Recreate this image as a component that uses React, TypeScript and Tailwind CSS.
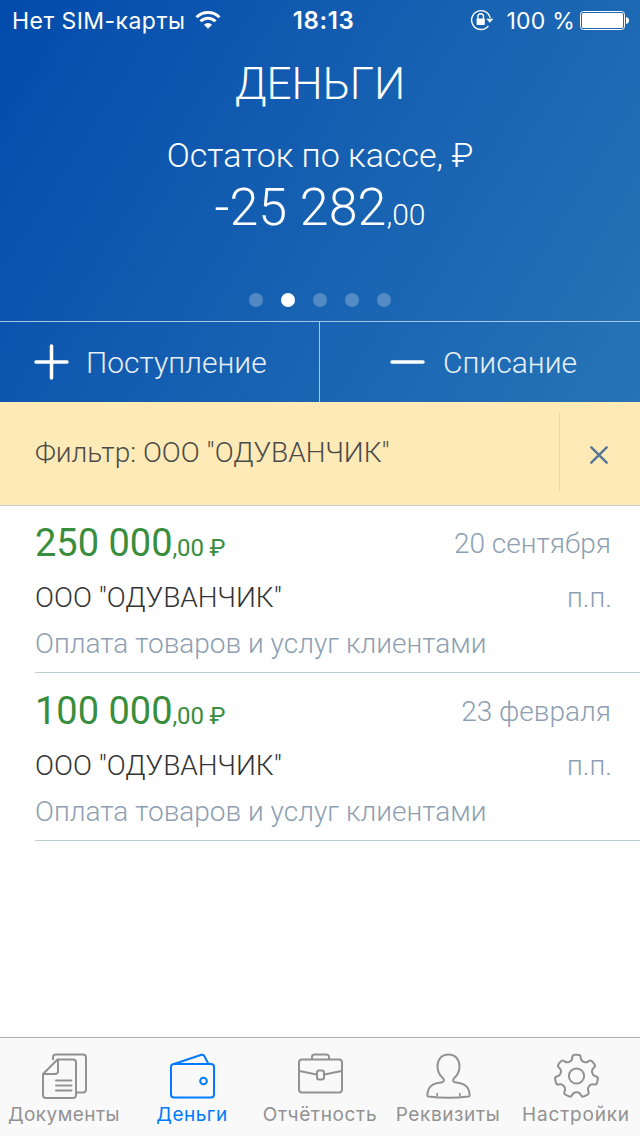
import type { ReactNode } from "react";

const roboto = "font-[Roboto,'Noto_Sans',sans-serif]";
const inter = "font-[Inter,'Noto_Sans',sans-serif]";

function WifiIcon() {
  return (
    <svg width="26" height="20" viewBox="0 0 26 20" fill="none" stroke="#fff" strokeWidth="2.9">
      <path d="M1.5 7.300A16.300 16.300 0 0 1 24.500 7.300" />
      <path d="M5.500 11.300A10.600 10.600 0 0 1 20.500 11.300" />
      <path d="M13 18.800L9 14.800A5.600 5.600 0 0 1 17 14.800Z" fill="#fff" stroke="none" />
    </svg>
  );
}

function LockIcon() {
  return (
    <svg width="24" height="22" viewBox="0 0 24 22" fill="none" stroke="#fff">
      <path d="M18.4 16.9A9.4 9.4 0 1 1 20.2 9.2" strokeWidth="1.4" />
      <path d="M16.2 9.8H23.4L19.8 13.8Z" fill="#fff" stroke="none" />
      <path d="M7.900 10V7.600a2.800 2.800 0 0 1 5.600 0V10" strokeWidth="1.400" />
      <rect x="6.600" y="9.400" width="8.200" height="6.600" rx=".800" fill="#fff" stroke="none" />
    </svg>
  );
}

function BatteryIcon() {
  return (
    <svg width="50" height="20" viewBox="0 0 50 20" fill="#fff">
      <rect x=".5" y="1.5" width="44" height="18" rx="3" fill="none" stroke="#fff" />
      <rect x="2" y="3" width="41" height="15" rx="1.5" />
      <path d="M46 7.100q3 .800 3 3.400t-3 3.400z" />
    </svg>
  );
}

function DocumentsIcon() {
  return (
    <>
      <path d="M11 7V4.500a3 3 0 0 1 3-3H41a3 3 0 0 1 3 3V36.500a3 3 0 0 1-3 3H34.500" />
      <path d="M15.500 6.500H31a3 3 0 0 1 3 3V42a3 3 0 0 1-3 3H4a3 3 0 0 1-3-3V21z" />
      <path d="M16 7V18.500a2.500 2.500 0 0 1-2.500 2.500H1.500" />
      <path d="M14 27.500H29.500M14 32.500H29.500M14 37.500H29.500" strokeLinecap="round" />
    </>
  );
}

function WalletIcon() {
  return (
    <>
      <rect x="1" y="11" width="43" height="33.500" rx="3" />
      <path d="M4 11L31.500 1.800q2-.600 2.800 1.200L38.500 11" />
      <circle cx="33.500" cy="28" r="3.300" />
    </>
  );
}

function BriefcaseIcon() {
  return (
    <>
      <rect x="1" y="6.500" width="43" height="33" rx="3" />
      <path d="M14 6.500V4a2.500 2.500 0 0 1 2.500-2.500H28.500A2.500 2.500 0 0 1 31 4V6.500" />
      <path d="M1.500 18L18.500 21.500M26.500 21.500L43.500 18" />
      <rect x="19" y="17.500" width="7" height="9" rx="2" />
    </>
  );
}

function PersonIcon() {
  return (
    <>
      <path d="M22.500 1.500C15.500 1.500 11.500 6.500 11.500 13.500C11.500 19 13.500 22 16.500 24.800C18.600 26.800 18.500 29.300 15 29.600C7 30.400 1.800 33 1.300 42.300Q1.300 43.300 2.500 43.500Q12 44.700 22.500 44.700T42.500 43.500Q43.700 43.300 43.700 42.300C43.200 33 38 30.400 30 29.600C26.500 29.300 26.400 26.800 28.500 24.800C31.500 22 33.500 19 33.500 13.500C33.500 6.500 29.500 1.500 22.500 1.500Z" />
      <path d="M11.200 40V43.500M33.800 40V43.500" strokeWidth="1.600" />
    </>
  );
}

function gearOutline() {
  const points: number[][] = [];
  for (let tooth = 0; tooth < 7; tooth++) {
    const profile = [[-15, 16.4], [-11, 21.9], [11, 21.9], [15, 16.4]];
    for (const [offset, radius] of profile) {
      const angle = ((tooth * 360) / 7 + offset - 90) * (Math.PI / 180);
      points.push([22.5 + radius * Math.cos(angle), 23.2 + radius * Math.sin(angle)]);
    }
  }
  return (
    points
      .map(([x, y], i) => {
        const toward = ([px, py]: number[]) => {
          const length = Math.hypot(px - x, py - y);
          const t = Math.min(2.7, length / 2) / length;
          return `${(x + (px - x) * t).toFixed(2)} ${(y + (py - y) * t).toFixed(2)}`;
        };
        const before = toward(points[(i + points.length - 1) % points.length]);
        const after = toward(points[(i + 1) % points.length]);
        return `${i ? "L" : "M"}${before}Q${x.toFixed(2)} ${y.toFixed(2)} ${after}`;
      })
      .join("") + "Z"
  );
}

function GearIcon() {
  return (
    <>
      <path d={gearOutline()} />
      <circle cx="22.500" cy="23" r="7.600" />
    </>
  );
}

function Tab({ label, active, tracking, children }: { label: string; active?: boolean; tracking: string; children: ReactNode }) {
  return (
    <div className={`flex flex-1 flex-col items-center pt-[15px] ${active ? "text-[#007aff]" : "text-[#929292]"}`}>
      <svg width="45" height="46" viewBox="0 0 45 46" fill="none" stroke="currentColor" strokeWidth="2" strokeLinejoin="round">
        {children}
      </svg>
      <span className={`${inter} ${tracking} mt-[4px] text-[19px] leading-[24px] whitespace-nowrap`}>{label}</span>
    </div>
  );
}

function Operation({ amount, date }: { amount: string; date: string }) {
  return (
    <div className="ml-[35px] h-[168px] border-b border-[#b9cfd4] pr-[29px] pt-[15px] text-[28px] font-light text-[#8e9fb3]">
      <div className="flex h-[46px] justify-between">
        <span className="text-[38px] leading-[46px] font-normal text-[#388e3c]">
          {amount}
          <span className="text-[24px] tracking-[-0.2px]">,00 ₽</span>
        </span>
        <span className="leading-[48px]">{date}</span>
      </div>
      <div className="mt-[9px] flex h-[46px] justify-between leading-[46px]">
        <span className="text-[#333]">ООО "ОДУВАНЧИК"</span>
        <span className="-mr-px">п.п.</span>
      </div>
      <div className="h-[46px] leading-[46px]">Оплата товаров и услуг клиентами</div>
    </div>
  );
}

export default function App() {
  return (
    <div className={`${roboto} flex h-[1136px] w-[640px] flex-col overflow-hidden bg-white`}>
      <header className="flex h-[402px] flex-col bg-[linear-gradient(122deg,#034bab_0%,#1862b2_55%,#2674b7_100%)] text-white">
        <div className={`${inter} grid h-[40px] grid-cols-[1fr_auto_1fr] items-center pl-[12px] pr-[10px] text-[23px]`}>
          <div className="flex items-center gap-[10px]">
            <span className="mt-[2px] tracking-[0.45px]">Нет SIM-карты</span>
            <WifiIcon />
          </div>
          <span className="mt-[2px] ml-[5px] text-[24px] font-semibold tracking-[0.6px]">18:13</span>
          <div className="flex items-center justify-end">
            <LockIcon />
            <span className="mt-[2px] mr-[5px] ml-[13px] tracking-[0.2px]">100 %</span>
            <BatteryIcon />
          </div>
        </div>
        <h1 className="mt-[18px] h-[52px] text-center text-[44px] leading-[52px] font-light">ДЕНЬГИ</h1>
        <div className="mt-[25px] h-[40px] text-center text-[34px] leading-[40px] font-light">Остаток по кассе, ₽</div>
        <div className="mt-[3px] h-[60px] text-center text-[52px] leading-[60px] font-light">
          -25 282<span className="text-[30px]">,00</span>
        </div>
        <div className="mt-[55px] flex justify-center gap-[18px]">
          <i className="size-[14px] rounded-full bg-white/25" />
          <i className="size-[14px] rounded-full bg-white" />
          <i className="size-[14px] rounded-full bg-white/25" />
          <i className="size-[14px] rounded-full bg-white/25" />
          <i className="size-[14px] rounded-full bg-white/25" />
        </div>
        <div className="mt-auto grid h-[81px] grid-cols-2 border-t border-[#a9c6e3] text-[30px] font-light text-white/90">
          <div className="flex items-center border-r border-[#a9c6e3] pl-[34px]">
            <svg width="35" height="36" viewBox="0 0 35 36" stroke="#fff" strokeWidth="3.500" strokeLinecap="round">
              <path d="M2 18H33M17.500 2V34" />
            </svg>
            <span className="mt-px ml-[17px]">Поступление</span>
          </div>
          <div className="flex items-center pl-[70px]">
            <svg width="35" height="36" viewBox="0 0 35 36" stroke="#fff" strokeWidth="3.500" strokeLinecap="round">
              <path d="M2 18H33" />
            </svg>
            <span className="mt-px ml-[18px]">Списание</span>
          </div>
        </div>
      </header>

      <div className="flex h-[104px] items-start border-b border-[#c6cfcf] bg-[#feeab6] pt-[10px]">
        <span className="flex-1 pt-[21px] pl-[35px] text-[28px] leading-[40px] font-light text-[#4a4a4a]">Фильтр: ООО "ОДУВАНЧИК"</span>
        <div className="flex h-[80px] w-[81px] items-center justify-center border-l border-[#e8d7ad]">
          <svg className="mt-[6px] mr-[2px]" width="20" height="20" viewBox="0 0 20 20" stroke="#557699" strokeWidth="2.400" strokeLinecap="round">
            <path d="M2.300 2.300L17.700 17.700M17.700 2.300L2.300 17.700" />
          </svg>
        </div>
      </div>

      <main className="-mt-px flex-1">
        <Operation amount="250 000" date="20 сентября" />
        <Operation amount="100 000" date="23 февраля" />
      </main>

      <nav className="flex h-[99px] border-t border-[#b0b0b0] bg-[#f9f9f9]">
        <Tab label="Документы" tracking="tracking-[0.45px]"><DocumentsIcon /></Tab>
        <Tab label="Деньги" tracking="tracking-[0.5px]" active><WalletIcon /></Tab>
        <Tab label="Отчётность" tracking="tracking-[0.65px]"><BriefcaseIcon /></Tab>
        <Tab label="Реквизиты" tracking="tracking-[0.6px]"><PersonIcon /></Tab>
        <Tab label="Настройки" tracking="tracking-[0.8px]"><GearIcon /></Tab>
      </nav>
    </div>
  );
}
